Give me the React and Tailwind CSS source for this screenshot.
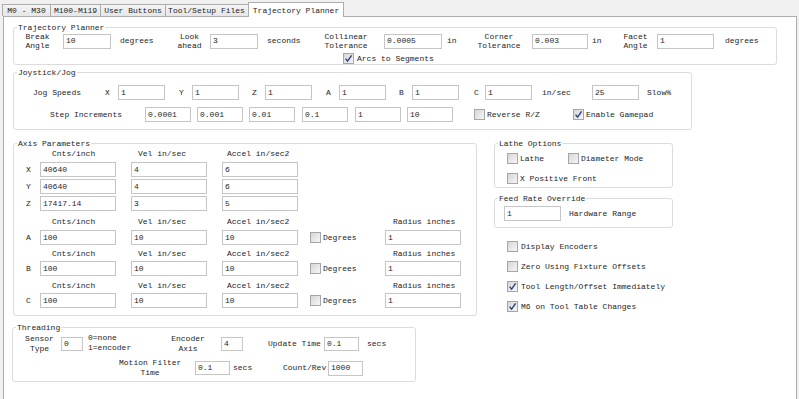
import React from "react";

const Inp = ({ c = "", v }) => (
  <div className={"shrink-0 border border-[#c5c5c5] bg-white pl-[2px] flex items-center leading-[10px] whitespace-nowrap overflow-hidden " + c}>
    {v}
  </div>
);

const Cb = ({ c = "", on }) => (
  <span className={"shrink-0 w-[11px] h-[11px] border border-[#a6a6a6] bg-linear-to-br from-[#d6d6d6] to-[#f6f6f6] flex items-center justify-center " + c}>
    {on && (
      <svg width="9" height="9" viewBox="0 0 9 9">
        <path d="M1.6 4.6 L3.6 7.1 L7.6 1.4" fill="none" stroke="#23427e" strokeWidth="1.4" />
      </svg>
    )}
  </span>
);

const L2 = ({ c = "", a, b }) => (
  <div className={"shrink-0 text-center whitespace-nowrap " + c}>
    {a}
    <br />
    {b}
  </div>
);

const T = ({ c = "", children }) => (
  <span className={"shrink-0 whitespace-nowrap leading-[10px] " + c}>{children}</span>
);

const Box = ({ c = "", title, children }) => (
  <fieldset className={"border border-[#dcdcdc] rounded-[3px] min-w-0 " + c}>
    <legend className="ml-[3px] px-[1px] leading-[9px] whitespace-nowrap">{title}</legend>
    {children}
  </fieldset>
);

const AxisHeader = ({ c = "", radius }) => (
  <div className={"flex h-[10px] items-center " + c}>
    <T c="ml-[38px] w-[43px]">Cnts/inch</T>
    <T c="ml-[43px] w-[48px]">Vel in/sec</T>
    <T c="ml-[41px] w-[62px]">Accel in/sec2</T>
    {radius && <T c="ml-[104px]">Radius inches</T>}
  </div>
);

const AxisRow = ({ c = "", l, a, b, d, rot }) => (
  <div className={"flex h-[15px] items-center " + c}>
    <T c="ml-[12px] w-[5px]">{l}</T>
    <Inp c="ml-[9px] w-[76px] h-[15px]" v={a} />
    <Inp c="ml-[15px] w-[76px] h-[15px]" v={b} />
    <Inp c="ml-[15px] w-[76px] h-[15px]" v={d} />
    {rot && (
      <>
        <Cb c="ml-[12px]" />
        <T c="ml-[2px] w-[34px]">Degrees</T>
        <Inp c="ml-[28px] w-[76px] h-[15px]" v="1" />
      </>
    )}
  </div>
);

const CbRow = ({ on, label }) => (
  <div className="flex h-[11px] items-center ml-[13px]">
    <Cb on={on} />
    <T c="ml-[3px]">{label}</T>
  </div>
);

export default function App() {
  return (
    <div className="w-[799px] h-[399px] overflow-hidden bg-[#f0f0f0] text-[#1e1e1e] text-[8px] font-['Liberation_Mono','Courier_New',monospace]">
      {/* Tabs */}
      <div className="flex items-end h-[16px] pl-[2px]">
        <div className="shrink-0 w-[48px] h-[12px] border-t border-l border-[#adadad] bg-linear-to-b from-[#f4f4f4] to-[#e6e6e6] flex items-center justify-center leading-[10px]">M0 - M30</div>
        <div className="shrink-0 w-[50px] h-[12px] border-t border-l border-[#adadad] bg-linear-to-b from-[#f4f4f4] to-[#e6e6e6] flex items-center justify-center leading-[10px]">M100-M119</div>
        <div className="shrink-0 w-[65px] h-[12px] border-t border-l border-[#adadad] bg-linear-to-b from-[#f4f4f4] to-[#e6e6e6] flex items-center justify-center leading-[10px]">User Buttons</div>
        <div className="shrink-0 w-[85px] h-[12px] border-t border-l border-r border-[#adadad] bg-linear-to-b from-[#f4f4f4] to-[#e6e6e6] flex items-center justify-center leading-[10px] pr-[2px]">Tool/Setup Files</div>
        <div className="relative z-10 shrink-0 -ml-[2px] -mb-px w-[96px] h-[15px] border-t border-l border-r border-[#adadad] bg-white flex items-start justify-center pt-[3px] leading-[10px]">Trajectory Planner</div>
      </div>

      {/* Panel */}
      <div className="ml-[3px] w-[794px] h-[395px] border border-[#adadad] bg-white pt-[6px]">
        {/* Trajectory Planner */}
        <Box c="ml-[9px] w-[764px]" title="Trajectory Planner">
          <div className="flex items-center h-[18px]">
            <L2 c="ml-[11px] w-[25px] leading-[9px]" a="Break" b="Angle" />
            <Inp c="ml-[13px] w-[48px] h-[15px]" v="10" />
            <T c="ml-[9px] w-[34px]">degrees</T>
            <L2 c="ml-[23px] w-[25px] leading-[9px]" a="Look" b="ahead" />
            <Inp c="ml-[8px] w-[48px] h-[15px]" v="3" />
            <T c="ml-[9px] w-[34px]">seconds</T>
            <L2 c="ml-[23px] w-[44px] leading-[9px]" a="Collinear" b="Tolerance" />
            <Inp c="ml-[16px] w-[58px] h-[15px]" v="0.0005" />
            <T c="ml-[5px] w-[10px]">in</T>
            <L2 c="ml-[20px] w-[44px] leading-[9px]" a="Corner" b="Tolerance" />
            <Inp c="ml-[11px] w-[56px] h-[15px]" v="0.003" />
            <T c="ml-[4px] w-[10px]">in</T>
            <L2 c="ml-[21px] w-[25px] leading-[9px]" a="Facet" b="Angle" />
            <Inp c="ml-[9px] w-[57px] h-[15px]" v="1" />
            <T c="ml-[11px]">degrees</T>
          </div>
          <div className="flex items-center mt-[3px] h-[11px]">
            <Cb c="ml-[329px]" on />
            <T c="ml-[3px]">Arcs to Segments</T>
          </div>
        </Box>

        {/* Joystick/Jog */}
        <Box c="ml-[9px] mt-[3px] w-[679px] pb-[7px]" title="Joystick/Jog">
          <div className="flex items-center mt-[8px] h-[15px]">
            <T c="ml-[19px] w-[48px]">Jog Speeds</T>
            <T c="ml-[24px] w-[5px]">X</T>
            <Inp c="ml-[8px] w-[47px] h-[15px]" v="1" />
            <T c="ml-[14px] w-[5px]">Y</T>
            <Inp c="ml-[8px] w-[47px] h-[15px]" v="1" />
            <T c="ml-[13px] w-[5px]">Z</T>
            <Inp c="ml-[8px] w-[47px] h-[15px]" v="1" />
            <T c="ml-[14px] w-[5px]">A</T>
            <Inp c="ml-[8px] w-[47px] h-[15px]" v="1" />
            <T c="ml-[13px] w-[5px]">B</T>
            <Inp c="ml-[8px] w-[47px] h-[15px]" v="1" />
            <T c="ml-[15px] w-[5px]">C</T>
            <Inp c="ml-[6px] w-[47px] h-[15px]" v="1" />
            <T c="ml-[10px] w-[29px]">in/sec</T>
            <Inp c="ml-[21px] w-[47px] h-[15px]" v="25" />
            <T c="ml-[8px]">Slow%</T>
          </div>
          <div className="flex items-center mt-[7px] h-[15px]">
            <T c="ml-[36px] w-[72px]">Step Increments</T>
            <Inp c="ml-[23px] w-[46px] h-[15px]" v="0.0001" />
            <Inp c="ml-[6px] w-[46px] h-[15px]" v="0.001" />
            <Inp c="ml-[6px] w-[46px] h-[15px]" v="0.01" />
            <Inp c="ml-[7px] w-[46px] h-[15px]" v="0.1" />
            <Inp c="ml-[7px] w-[46px] h-[15px]" v="1" />
            <Inp c="ml-[6px] w-[46px] h-[15px]" v="10" />
            <Cb c="ml-[21px]" />
            <T c="ml-[2px] w-[53px]">Reverse R/Z</T>
            <Cb c="ml-[33px]" on />
            <T c="ml-[2px]">Enable Gamepad</T>
          </div>
        </Box>

        {/* Axis + right column */}
        <div className="flex items-start mt-[9px]">
          <Box c="ml-[9px] w-[464px] pb-[7px]" title="Axis Parameters">
            <AxisHeader c="mt-[1px]" />
            <AxisRow c="mt-[3px]" l="X" a="40640" b="4" d="6" />
            <AxisRow c="mt-[2px]" l="Y" a="40640" b="4" d="6" />
            <AxisRow c="mt-[2px]" l="Z" a="17417.14" b="3" d="5" />
            <AxisHeader c="mt-[6px]" radius />
            <AxisRow c="mt-[3px]" l="A" a="100" b="10" d="10" rot />
            <AxisHeader c="mt-[4px]" radius />
            <AxisRow c="mt-[2px]" l="B" a="100" b="10" d="10" rot />
            <AxisHeader c="mt-[5px]" radius />
            <AxisRow c="mt-[2px]" l="C" a="100" b="10" d="10" rot />
          </Box>

          <div className="ml-[17px] w-[179px] flex flex-col">
            <Box c="w-[179px] pb-[3px]" title="Lathe Options">
              <div className="flex items-center mt-[5px] h-[11px]">
                <Cb c="ml-[12px]" />
                <T c="ml-[2px] w-[24px]">Lathe</T>
                <Cb c="ml-[24px]" />
                <T c="ml-[2px]">Diameter Mode</T>
              </div>
              <div className="flex items-center mt-[9px] h-[11px]">
                <Cb c="ml-[12px]" />
                <T c="ml-[2px]">X Positive Front</T>
              </div>
            </Box>
            <Box c="mt-[6px] w-[179px] pb-[6px]" title="Feed Rate Override">
              <div className="flex items-center mt-[3px] h-[15px]">
                <Inp c="ml-[9px] w-[57px] h-[15px]" v="1" />
                <T c="ml-[8px]">Hardware Range</T>
              </div>
            </Box>
            <div className="mt-[13px] flex flex-col gap-[9px]">
              <CbRow label="Display Encoders" />
              <CbRow label="Zero Using Fixture Offsets" />
              <CbRow on label="Tool Length/Offset Immediately" />
              <CbRow on label="M6 on Tool Table Changes" />
            </div>
          </div>
        </div>

        {/* Threading */}
        <Box c="ml-[8px] mt-[7px] w-[404px] pb-[3px]" title="Threading">
          <div className="flex items-center mt-[2px] h-[20px]">
            <L2 c="ml-[12px] w-[29px] leading-[10px]" a="Sensor" b="Type" />
            <Inp c="ml-[7px] w-[22px] h-[14px]" v="0" />
            <div className="shrink-0 ml-[5px] w-[43px] leading-[10px] whitespace-nowrap -mt-[2px]">
              0=none
              <br />
              1=encoder
            </div>
            <L2 c="ml-[40px] w-[34px] leading-[10px]" a="Encoder" b="Axis" />
            <Inp c="ml-[16px] w-[22px] h-[14px]" v="4" />
            <T c="ml-[25px] w-[53px]">Update Time</T>
            <Inp c="ml-[3px] w-[35px] h-[14px]" v="0.1" />
            <T c="ml-[8px]">secs</T>
          </div>
          <div className="flex items-center mt-[4px] h-[20px]">
            <L2 c="ml-[106px] w-[62px] leading-[10px]" a="Motion Filter" b="Time" />
            <Inp c="ml-[14px] w-[35px] h-[14px]" v="0.1" />
            <T c="ml-[3px] w-[19px]">secs</T>
            <T c="ml-[31px] w-[43px]">Count/Rev</T>
            <Inp c="ml-[2px] w-[35px] h-[15px]" v="1000" />
          </div>
        </Box>
      </div>
    </div>
  );
}
